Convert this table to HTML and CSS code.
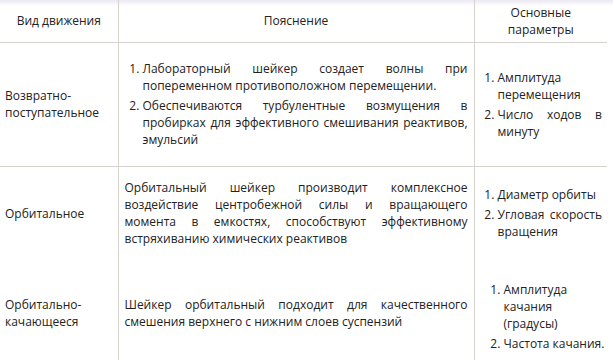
FILE: index.html
```
<!DOCTYPE html>
<html lang="ru">
<head>
<meta charset="utf-8">
<link rel="stylesheet" href="styles.css">
</head>
<body>
<div class="page">
<table class="grid">
<colgroup><col class="c1"><col class="c2"><col class="c3"></colgroup>
<thead>
<tr class="head">
<th class="cell h1">Вид движения</th>
<th class="cell h2">Пояснение</th>
<th class="cell h3">Основные<br>параметры</th>
</tr>
</thead>
<tbody>
<tr class="r1">
<td class="cell kind">Возвратно-<br>поступательное</td>
<td class="cell desc">
<ol class="list2">
<li>Лабораторный шейкер создает волны при попеременном противоположном перемещении.</li>
<li>Обеспечиваются турбулентные возмущения в пробирках для эффективного смешивания реактивов, эмульсий</li>
</ol>
</td>
<td class="cell params">
<ol class="list3">
<li>Амплитуда перемещения</li>
<li>Число ходов в минуту</li>
</ol>
</td>
</tr>
<tr class="r2">
<td class="cell kind">Орбитальное</td>
<td class="cell desc"><p>Орбитальный шейкер производит комплексное воздействие центробежной силы и вращающего момента в емкостях, способствуют эффективному встряхиванию химических реактивов</p></td>
<td class="cell params">
<ol class="list3">
<li>Диаметр орбиты</li>
<li>Угловая скорость вращения</li>
</ol>
</td>
</tr>
<tr class="r3">
<td class="cell kind">Орбитально-<br>качающееся</td>
<td class="cell desc"><p>Шейкер орбитальный подходит для качественного смешения верхнего с нижним слоев суспензий</p></td>
<td class="cell params">
<ol class="list3 wide">
<li>Амплитуда<br>качания<br>(градусы)</li>
<li class="nowrap">Частота качания.</li>
</ol>
</td>
</tr>
</tbody>
</table>
</div>
</body>
</html>
```
FILE: styles.css
```
html, body {
  margin: 0;
  padding: 0;
  background: #fff;
}
body {
  font-family: "Open Sans", "Noto Sans", sans-serif;
  font-size: 12px;
  line-height: 17px;
  color: #222;
  background: linear-gradient(#ebe8f1 0, #fff 6px) no-repeat;
  width: 613px;
  height: 360px;
  overflow: hidden;
}
.page {
  width: 613px;
}
.grid {
  border-collapse: collapse;
  width: 607px;
  table-layout: fixed;
}
.c1 { width: 118px; }
.c2 { width: 356px; }
.c3 { width: 133px; }
.cell {
  border: 1px solid #d6d3ce;
  vertical-align: middle;
  padding: 0;
}
.h1, .kind { border-left: none; }
.h3, .params { border-right: none; }
.head .cell { border-top: none; }
.r2 .cell { border-bottom: none; }
.r3 .cell { border-top: none; border-bottom: none; }
.head { height: 42px; }
.head .cell {
  font-weight: normal;
  text-align: center;
}
.r1 { height: 124px; }
.r2 { height: 94px; }
.r3 { height: 105px; }
.cell.kind {
  padding-left: 5px;
  text-align: left;
}
.cell.desc {
  padding: 0 6px 0 6px;
  text-align: justify;
}
.desc p { margin: 0; }
.cell.params {
  padding: 0 5px 0 6px;
  text-align: justify;
}
ol {
  margin: 0;
}
.list2 { padding-left: 18px; }
.list3 { padding-left: 17px; }
.list3.wide { padding-left: 23px; text-align: left; margin-top: 8px; }
.nowrap { white-space: nowrap; }
li + li { margin-top: 3px; }
```
